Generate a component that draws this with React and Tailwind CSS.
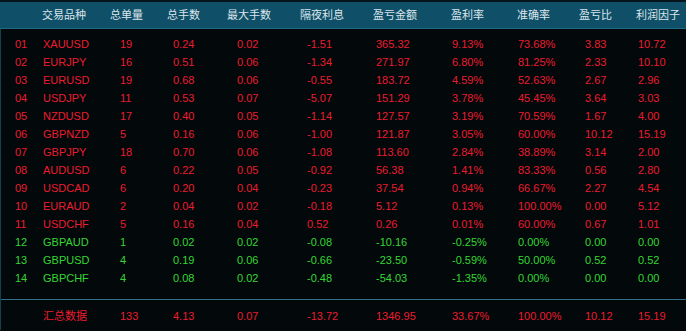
// ─── Trade Statistics Table ───────────────────────────────────────────────────
const RED = 'text-[#ec1c2e]';
const GREEN = 'text-[#35d633]';

const HEADERS = ['', '交易品种', '总单量', '总手数', '最大手数', '隔夜利息', '盈亏金额', '盈利率', '准确率', '盈亏比', '利润因子'];

// value offsets inside each column (header sits at column start)
const PAD = ['pl-[14px]', 'pl-0', 'pl-[9px]', 'pl-[5px]', 'pl-[9px]', 'pl-[6px]', 'pl-[2px]', 'pl-0', 'pl-0', 'pl-[5px]', 'pl-[1px]'];

const ROWS = [
  ['01', 'XAUUSD', '19', '0.24', '0.02', '-1.51', '365.32', '9.13%', '73.68%', '3.83', '10.72'],
  ['02', 'EURJPY', '16', '0.51', '0.06', '-1.34', '271.97', '6.80%', '81.25%', '2.33', '10.10'],
  ['03', 'EURUSD', '19', '0.68', '0.06', '-0.55', '183.72', '4.59%', '52.63%', '2.67', '2.96'],
  ['04', 'USDJPY', '11', '0.53', '0.07', '-5.07', '151.29', '3.78%', '45.45%', '3.64', '3.03'],
  ['05', 'NZDUSD', '17', '0.40', '0.05', '-1.14', '127.57', '3.19%', '70.59%', '1.67', '4.00'],
  ['06', 'GBPNZD', '5', '0.16', '0.06', '-1.00', '121.87', '3.05%', '60.00%', '10.12', '15.19'],
  ['07', 'GBPJPY', '18', '0.70', '0.06', '-1.08', '113.60', '2.84%', '38.89%', '3.14', '2.00'],
  ['08', 'AUDUSD', '6', '0.22', '0.05', '-0.92', '56.38', '1.41%', '83.33%', '0.56', '2.80'],
  ['09', 'USDCAD', '6', '0.20', '0.04', '-0.23', '37.54', '0.94%', '66.67%', '2.27', '4.54'],
  ['10', 'EURAUD', '2', '0.04', '0.02', '-0.18', '5.12', '0.13%', '100.00%', '0.00', '5.12'],
  ['11', 'USDCHF', '5', '0.16', '0.04', '0.52', '0.26', '0.01%', '60.00%', '0.67', '1.01'],
  ['12', 'GBPAUD', '1', '0.02', '0.02', '-0.08', '-10.16', '-0.25%', '0.00%', '0.00', '0.00'],
  ['13', 'GBPUSD', '4', '0.19', '0.06', '-0.66', '-23.50', '-0.59%', '50.00%', '0.52', '0.52'],
  ['14', 'GBPCHF', '4', '0.08', '0.02', '-0.48', '-54.03', '-1.35%', '0.00%', '0.00', '0.00'],
];

const TOTAL = ['', '汇总数据', '133', '4.13', '0.07', '-13.72', '1346.95', '33.67%', '100.00%', '10.12', '15.19'];

const GRID = 'grid grid-cols-[42px_68px_57px_60px_73px_73px_78px_66px_62px_57px_50px]';
const FONT = "font-['Liberation_Sans','Noto_Sans_CJK_SC',sans-serif]";

function Row({ cells, color, className = '' }) {
  return (
    <div className={`${GRID} h-[18px] items-center text-[11px] leading-none ${color} ${className}`}>
      {cells.map((c, i) => (
        <div key={i} className={`${PAD[i]} whitespace-nowrap`}>
          {c}
        </div>
      ))}
    </div>
  );
}

export default function App() {
  return (
    <div className={`w-[686px] h-[331px] overflow-hidden bg-[#03080b] ${FONT}`}>
      <div className="h-[2px] bg-[#05141b]" />

      {/* Header */}
      <div className={`${GRID} h-[27px] items-center bg-[#0f4f67] border-b border-[#1d6c84] text-[11px] text-[#dbe6ec]`}>
        {HEADERS.map((h, i) => (
          <div key={i} className="whitespace-nowrap">{h}</div>
        ))}
      </div>

      <div className="border-l border-[#17404e]">
        {/* Rows */}
        <div className="pt-[6px] pb-[12px]">
          {ROWS.map((r) => (
            <Row key={r[0]} cells={r} color={Number(r[0]) <= 11 ? RED : GREEN} />
          ))}
        </div>

        {/* Summary */}
        <div className="border-t border-[#2f7288] pt-[7px] h-[31px]">
          <Row cells={TOTAL} color={RED} />
        </div>
      </div>
    </div>
  );
}
